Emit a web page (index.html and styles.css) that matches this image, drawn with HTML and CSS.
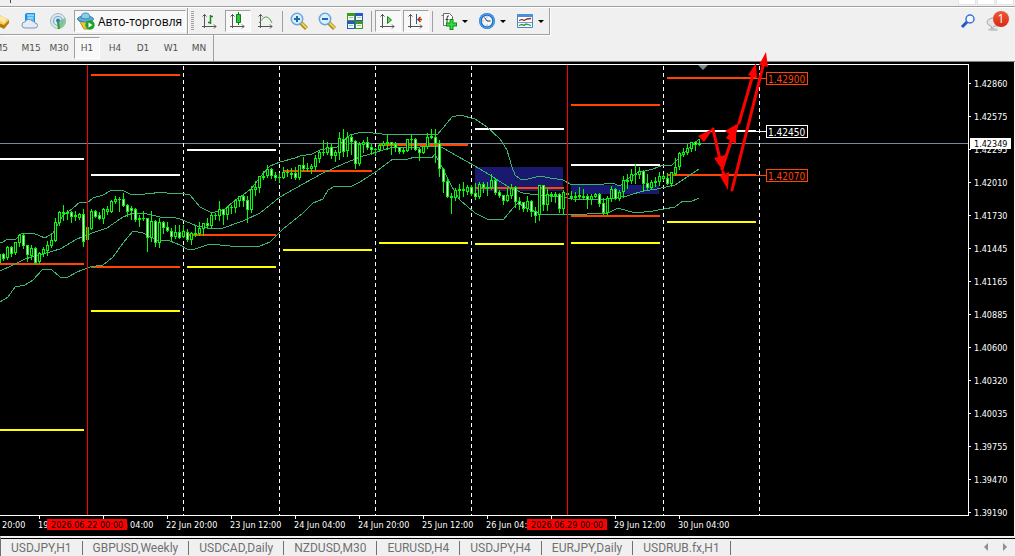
FILE: index.html
```html
<!DOCTYPE html>
<html lang="ru">
<head>
<meta charset="utf-8">
<title>H1</title>
<link rel="stylesheet" href="styles.css">
</head>
<body>
<div class="app">
  <div class="menu-edge">
    <span class="menu-mark"></span>
    <span class="win-box"></span><span class="win-box"></span><span class="win-box"></span>
  </div>
  <header class="toolbars">
    <div class="row">
      <div class="group group-main">
        <button class="tool tool-cut" aria-label="Ордер"><svg width="18" height="18" viewBox="0 0 18 18"><path d="M1 9 6 3l10 5v3l-5 6L1 12z" fill="#b87a10"/><path d="M1 9 6 3l10 5-5 5z" fill="#f7cf62"/><path d="m5 7 3-3 6 3-3 4z" fill="#fde9a6"/></svg></button>
        <button class="tool" aria-label="VPS"><svg width="18" height="18" viewBox="0 0 18 18"><path d="M4 2l2-1h8v10H4z" fill="#1593e6"/><path d="M6 3h7v7H6z" fill="#4db8f8"/><path d="M6 3h7M7 6h5" stroke="#d9f1ff"/><path d="M4 16a3 3 0 0 1 0-6 4 4 0 0 1 7-1 3 3 0 0 1 3 2 2.500 2.500 0 0 1 0 5z" fill="#e4ecf6" stroke="#7d95b8"/></svg></button>
        <button class="tool" aria-label="Сигналы"><svg width="18" height="18" viewBox="0 0 18 18"><circle cx="9" cy="9" r="7.500" fill="#dce9ec" stroke="#9fb9c9"/><path d="M9 9l7-3a7.500 7.500 0 0 1-5 10.500L9 17z" fill="#8cc98e"/><circle cx="9" cy="9" r="4.500" fill="none" stroke="#7da9d0" stroke-width="1.200"/><circle cx="9" cy="8.500" r="2" fill="#3579c4"/><path d="M9 10l1 7" fill="none" stroke="#2ca22c" stroke-width="2"/></svg></button>
        <button class="tool tool-auto is-on"><svg width="18" height="18" viewBox="0 0 18 18"><path d="M2 8h13l-3 9H7z" fill="#f2c43b" stroke="#c28c14"/><ellipse cx="8.500" cy="7" rx="8" ry="3" fill="#5faed8" stroke="#2f7eab"/><path d="M4 6q0-5 4.500-5T13 6q-4 2-9 0z" fill="#8cccec" stroke="#3c8cb8"/><circle cx="13" cy="13" r="4.700" fill="#1ea32c"/><path d="m11.500 10.500 4 2.500-4 2.500z" fill="#fff"/></svg><span>Авто-торговля</span></button>
      </div>
      <div class="group group-chart">
        <i class="grip"></i>
        <button class="tool" aria-label="Бары"><svg width="18" height="18" viewBox="0 0 18 18"><path d="M3.500 2v14M1 14.500h14M1.500 4.500l2-2 2 2M13 12.500l2 2-2 2" stroke="#555" fill="none"/><path d="M9.500 3v9M7 10.500h2.500M9.500 4.500H12" stroke="#168a16" fill="none" stroke-width="1.500"/></svg></button>
        <button class="tool is-on" aria-label="Свечи"><svg width="18" height="18" viewBox="0 0 18 18"><path d="M3.500 2v14M1 14.500h14M1.500 4.500l2-2 2 2M13 12.500l2 2-2 2" stroke="#555" fill="none"/><path d="M9.500 0v13" stroke="#118011"/><path d="M7.500 2.500h4v8h-4z" fill="#27c83c" stroke="#118011"/></svg></button>
        <button class="tool" aria-label="Линия"><svg width="18" height="18" viewBox="0 0 18 18"><path d="M3.500 2v14M1 14.500h14M1.500 4.500l2-2 2 2M13 12.500l2 2-2 2" stroke="#555" fill="none"/><path d="M2 11q5-7 8-6t5 6" stroke="#49a049" fill="none"/></svg></button>
        <i class="sep"></i>
        <button class="tool" aria-label="Увеличить"><svg width="18" height="18" viewBox="0 0 18 18"><path d="m10.500 10.500 6 6" stroke="#a98216" stroke-width="4"/><path d="m11 10.500 5.500 5.500" stroke="#f4d24f" stroke-width="2"/><circle cx="7" cy="7" r="5.700" fill="#d9efff" stroke="#6ca6d8" stroke-width="1.500"/><path d="M4 7h6M7 4v6" stroke="#2467a8" stroke-width="2"/></svg></button>
        <button class="tool" aria-label="Уменьшить"><svg width="18" height="18" viewBox="0 0 18 18"><path d="m10.500 10.500 6 6" stroke="#a98216" stroke-width="4"/><path d="m11 10.500 5.500 5.500" stroke="#f4d24f" stroke-width="2"/><circle cx="7" cy="7" r="5.700" fill="#d9efff" stroke="#6ca6d8" stroke-width="1.500"/><path d="M4 7h6" stroke="#2467a8" stroke-width="2"/></svg></button>
        <button class="tool" aria-label="Окна"><svg width="18" height="18" viewBox="0 0 18 18"><path d="M1 1h8v8H1zM9 9h8v8H9z" fill="#3f9a1c"/><path d="M9 1h8v8H9zM1 9h8v8H1z" fill="#2558c8"/><path d="M2 4h6v4H2zM10 4h6v4h-6zM2 12h6v4H2zM10 12h6v4h-6z" fill="#f2f8f2"/><path d="M3 5.500h4M11 5.500h4M3 13.500h4M11 13.500h4" stroke="#9cc4a4"/></svg></button>
        <i class="sep"></i>
        <button class="tool is-on" aria-label="Автопрокрутка"><svg width="18" height="18" viewBox="0 0 18 18"><path d="M3.500 2v14M1 14.500h14M1.500 4.500l2-2 2 2M13 12.500l2 2-2 2" stroke="#555" fill="none"/><path d="m8.500 4.500 4 3.500-4 3.500z" fill="#5fd25f" stroke="#168a16"/></svg></button>
        <button class="tool is-on" aria-label="Сдвиг"><svg width="18" height="18" viewBox="0 0 18 18"><path d="M3.500 2v14M1 14.500h14M1.500 4.500l2-2 2 2M13 12.500l2 2-2 2" stroke="#555" fill="none"/><path d="M9.500 2v10" stroke="#1565a0"/><path d="M15 7.500h-4M13.500 5 11 7.500l2.500 2.500" stroke="#c03008" fill="none" stroke-width="1.500"/></svg></button>
        <i class="sep"></i>
        <button class="tool tool-drop" aria-label="Индикаторы"><svg width="18" height="18" viewBox="0 0 18 18"><path d="M3.500 1.500h6l3 3v9h-9z" fill="#fff" stroke="#666"/><path d="M1.500 3.500h2v10h6" fill="none" stroke="#777"/><path d="M9 4q-2-1-2 2v6M5.500 7.500h3" stroke="#333" fill="none"/><path d="M11.500 7v11M6 12.500h11" stroke="#0c8f14" stroke-width="4"/><path d="M11.500 8v9M7 12.500h9" stroke="#35dd3f" stroke-width="2"/></svg><i class="caret"></i></button>
        <button class="tool tool-drop" aria-label="Периоды"><svg width="18" height="18" viewBox="0 0 18 18"><circle cx="9" cy="9" r="8" fill="#1c6fca"/><circle cx="9" cy="9" r="7" fill="none" stroke="#62adf0"/><circle cx="9" cy="9" r="5.200" fill="#f1f7fc"/><path d="M9 9 6.500 5.500M9 9h3.500" stroke="#333" fill="none"/><path d="M9 4.500v1M9 12.500v1M4.500 9h1" stroke="#777"/></svg><i class="caret"></i></button>
        <button class="tool tool-drop" aria-label="Шаблоны"><svg width="18" height="18" viewBox="0 0 18 18"><path d="M1.500 2.500h15v13h-15z" fill="#fff" stroke="#4a86c8"/><path d="M1 2h16v3H1z" fill="#4a8fdc"/><path d="M2 10.500h14" stroke="#6e9fd4"/><path d="m3 8.500 3-1 2 1 3-1.500 4-.5" stroke="#a3281c" fill="none" stroke-width="1.300"/><path d="m3 13.500 3-1 2 1 2-1.500 2 .5 3 1" stroke="#1c8f2c" fill="none" stroke-width="1.200"/></svg><i class="caret"></i></button>
      </div>
      <div class="right">
        <button class="tool" aria-label="Поиск"><svg width="18" height="18" viewBox="0 0 18 18"><circle cx="11" cy="6" r="4" fill="#f4f8ff" stroke="#3a6fdc" stroke-width="1.500"/><path d="m8 9-5 5" stroke="#2456c8" stroke-width="3"/></svg></button>
        <button class="tool tool-chat" aria-label="Сообщения"><svg width="20" height="20" viewBox="0 0 20 20"><ellipse cx="7" cy="17.500" rx="5" ry="1.500" fill="#c8c8c8"/><path d="M6 17 5 14Q1 13 1 10t5-4h5q4 1 3 5t-6 3z" fill="#e6e6ea" stroke="#a8a8ae"/></svg><span class="badge">1</span></button>
      </div>
    </div>
    <div class="row row-frames">
      <div class="group group-frames">
        <button class="frame frame-cut">M5</button><button class="frame">M15</button><button class="frame">M30</button><button class="frame is-on">H1</button><button class="frame">H4</button><button class="frame">D1</button><button class="frame">W1</button><button class="frame">MN</button>
      </div>
    </div>
  </header>
  <main class="chart">
    <svg id="plot" viewBox="0 62 1014 474" role="img" aria-label="H1">
      <g id="zones" class="zone"></g>
      <path class="price-line" d="M0 143.500h968"/>
      <g id="levels"></g>
      <g id="days"></g>
      <g class="bands">
        <polyline points="0,242 3,242 8,239 15,240 21,234 33,233 40,236 45,238 53,233 63,215 72,209 80,202 87,203 93,198 103,195 112,190 122,190 130,194 143,195 147,193 152,194 157,192 167,193 180,193 190,195 200,207 212,213 225,209 233,202 243,195 252,188 260,177 270,166 280,162 295,158 300,156 312,154 320,150 330,148 337,147 342,142 350,135 362,132 373,133 390,135 410,134 437,135 443,128 452,117 460,115 475,119 487,127 500,139 507,150 512,167 515,175 520,179 528,179 540,176 550,178 563,180 572,185 583,184 597,185 612,183 620,186 627,179 637,173 653,169 663,165 672,165 680,157 690,147 699,139"/>
        <polyline points="0,271 13,265 25,259 43,254 60,249 77,239 95,232 107,228 123,217 133,213 143,213 160,217 172,217 180,219 197,226 207,228 223,228 243,221 260,213 280,197 303,184 323,173 343,164 360,157 377,152 393,147 420,147 437,146 443,148 457,156 475,166 493,177 510,188 523,193 530,194 550,196 563,197 573,199 607,199 627,196 643,191 657,189 675,185 687,177 699,169"/>
        <polyline points="0,302 8,297 15,287 25,285 33,280 43,269 52,270 60,277 68,277 77,272 90,267 103,265 113,257 123,243 133,231 143,233 157,240 170,241 180,245 187,249 195,249 210,244 240,247 260,246 270,242 283,229 303,213 313,203 323,199 328,190 335,186 350,187 360,182 377,171 393,159 408,159 415,157 432,158 435,154 442,167 452,187 460,200 475,213 487,219 503,220 513,208 518,203 527,208 540,214 567,215 608,213 618,208 635,213 653,211 675,207 683,201 690,202 699,198"/>
      </g>
      <g id="candles"></g>
      <path class="event" d="M87.500 65v450M567.500 65v450"/>
      <path class="frame-line" d="M0 64.500h968.500v451H0"/>
      <path fill="#778899" d="M698 65h10l-5 5z"/>
      <g id="priceAxis" class="axis"></g>
      <g id="timeAxis" class="axis"></g>
      <g class="mark"><rect x="47" y="519" width="80" height="11"/><text x="51" y="528">2026.06.22 00:00</text></g>
      <g class="mark"><rect x="527" y="519" width="80" height="11"/><text x="531" y="528">2026.06.29 00:00</text></g>
      <g class="tag tag-red"><path d="M756 78.500h10"/><rect x="766.500" y="72.500" width="41" height="12"/><text x="768" y="83">1.42900</text></g>
      <g class="tag tag-white"><path d="M756 131.500h10"/><rect x="766.500" y="125.500" width="41" height="12"/><text x="768" y="136">1.42450</text></g>
      <g class="tag tag-red"><path d="M756 175.500h10"/><rect x="766.500" y="169.500" width="41" height="12"/><text x="768" y="180">1.42070</text></g>
      <g class="arrows">
        <path class="shaft" d="M713 129 721 164M722 169l11-34M739 123l15-52M732 190l32-128M723 172l3 8"/>
        <path class="head" d="M698 136 714 128 704 142zM714 158l11-3-2 16zM748 75l9 3-1-15zM759 65l9 2-2-15zM720 176l9-4-1 18z"/>
        <path class="head" d="M726 138l10 6 0-20z"/>
        <path class="head" d="M725 131l14-8-4 15z"/>
      </g>
    </svg>
  </main>
  <nav class="tabs">
    <button class="tab">USDJPY,H1</button><button class="tab">GBPUSD,Weekly</button><button class="tab">USDCAD,Daily</button><button class="tab">NZDUSD,M30</button><button class="tab">EURUSD,H4</button><button class="tab">USDJPY,H4</button><button class="tab">EURJPY,Daily</button><button class="tab">USDRUB.fx,H1</button>
    <span class="scroll"><button class="arrow" aria-label="Назад"><svg width="4" height="8" viewBox="0 0 4 8"><path d="M4 0v8L0 4z"/></svg></button><button class="arrow" aria-label="Вперёд"><svg width="4" height="8" viewBox="0 0 4 8"><path d="M0 0v8l4-4z"/></svg></button></span>
  </nav>
</div>
<script src="chart.js"></script>
</body>
</html>
```

FILE: styles.css
```css
* { box-sizing: border-box; }
body { margin: 0; background: #f0f0f0; font-family: "Open Sans", "Noto Sans", sans-serif; font-size: 12px; }
button { border: 0; padding: 0; margin: 0; background: none; font: inherit; color: inherit; }
.app { display: flex; flex-direction: column; min-height: 100vh; overflow: hidden; }
.menu-edge { display: flex; justify-content: flex-end; gap: 1px; height: 7px; border-bottom: 1px solid #a0a0a0; padding-right: 1px; }
.menu-mark { width: 1px; height: 3px; background: #7a2f5c; margin: 0 auto 0 10px; }
.win-box { width: 18px; height: 5px; border: 1px solid #e4e4e4; border-top: 0; background: #fff; }
.toolbars { border-top: 1px solid #fff; border-bottom: 1px solid #808080; background: #f0f0f0; }
.row { display: flex; height: 27px; }
.group { display: flex; align-items: center; gap: 2px; border-right: 1px solid #a0a0a0; border-bottom: 1px solid #a0a0a0; box-shadow: 1px 1px 0 #fff; }
.group-main { padding-right: 1px; }
.group-chart { padding: 0 1px 0 3px; }
.group-frames { padding-right: 1px; border-bottom: 0; box-shadow: none; }
.row-frames { height: 26px; }
.tool { display: flex; align-items: center; justify-content: center; width: 26px; height: 22px; flex: none; }
.tool svg { flex: none; }
.tool-cut { width: 15px; justify-content: flex-end; padding-right: 4px; }
.tool-auto { width: auto; gap: 3px; padding: 0 3px 0 2px; margin-left: 1px; color: #000; }
.tool-drop { width: 36px; gap: 4px; }
.is-on { background: #f8f8f8; border: 1px solid #fff; border-top-color: #a0a0a0; border-left-color: #a0a0a0; }
.grip { width: 3px; height: 20px; margin-right: 1px; background: repeating-linear-gradient(#a0a0a0 0 1px, #f0f0f0 1px 2px); }
.sep { width: 1px; height: 21px; margin: 0 1px; background: #a0a0a0; }
.caret { border: 3px solid transparent; border-top-color: #000; border-bottom: 0; }
.right { display: flex; align-items: center; gap: 2px; margin-left: auto; padding-right: 6px; }
.tool-chat { position: relative; }
.badge { position: absolute; right: 0; top: 0; width: 16px; height: 16px; border-radius: 8px; background: linear-gradient(#f0583a, #d82a10); color: #fff; line-height: 16px; text-align: center; }
.frame { width: 26px; height: 22px; font-family: "DejaVu Sans", sans-serif; font-size: 9px; color: #505050; }
.frame-cut { width: 16px; display: flex; align-items: center; justify-content: flex-end; padding-right: 8px; }
.chart { display: flex; flex: 1; margin-right: 1px; background: #000; }
.chart svg { display: block; width: 100%; overflow: visible; }
#plot text { font-family: "DejaVu Sans Condensed", "DejaVu Sans", sans-serif; font-size: 9px; }
#plot .tag text { font-size: 10px; }
#zones, #levels, #days, #candles, .price-line, .event, .frame-line, .bands, .axis path, .axis rect, .tag path, .tag rect { shape-rendering: crispEdges; }
.zone { fill: #191970; }
.price-line { stroke: #778899; }
.bands polyline { fill: none; stroke: #3cb371; }
.day { stroke: #fff; stroke-dasharray: 4 3; }
.event { stroke: #f00; }
.frame-line { fill: none; stroke: #fff; }
.level-red { fill: #ff4500; }
.level-white { fill: #fff; }
.level-yellow { fill: #ff0; }
.candle { fill: #0f0; }
.body-up { fill: #000; }
.body-down { fill: #fff; }
.axis path { stroke: #fff; }
.axis text { fill: #fff; }
.axis .now { fill: #fff; }
#plot .axis .now-text { fill: #000; }
.mark rect { fill: #f00; }
.mark text { fill: #000; }
.tag rect { fill: #000; }
.tag-red { stroke: #ff4500; fill: #ff4500; }
.tag-white { stroke: #fff; fill: #fff; }
.tag text { stroke: none; }
.arrows .shaft { stroke: #f00; stroke-width: 3; stroke-linecap: round; }
.arrows .head { fill: #f00; }
.tabs { display: flex; align-items: center; height: 20px; border-top: 2px solid #f0f0f0; box-shadow: inset 0 1px 0 #000; color: #707070; border-left: 1px solid #707070; font-family: Roboto, sans-serif; }
.tab { height: 14px; margin-top: 1px; padding: 0 10px; line-height: 14px; border-right: 1px solid #707070; white-space: nowrap; }
.scroll { display: flex; gap: 15px; margin-left: auto; padding-right: 8px; }
.arrow { display: flex; fill: #909090; }
```

FILE: chart.js
```javascript
const NS = "http://www.w3.org/2000/svg";

function add(parent, tag, attrs, text) {
  const el = document.createElementNS(NS, tag);
  for (const key in attrs) el.setAttribute(key, attrs[key]);
  if (text) el.textContent = text;
  document.getElementById(parent).appendChild(el);
}

// Hourly bars: high, body top, body bottom, low, direction (u = up, d = down)
const bars = `253 254 262 263 d|253 254 258 260 d|246 247 257 259 u|246 247 253 256 d|242 242 252 254 u|234 235 242 246 u
233 235 245 248 d|245 245 254 261 d|245 248 255 259 u|247 248 262 264 d|252 253 261 263 u
247 249 253 256 u|241 245 250 255 u|235 240 245 247 u|218 222 240 241 u|211 212 222 225 u
205 212 213 220 u|210 212 213 219 u|211 212 216 222 d|211 215 216 220 u|213 214 217 219 u
209 214 241 246 d|220 227 239 248 u|209 211 228 229 u|210 211 216 217 d|212 215 218 219 d
208 209 218 223 u|206 209 211 214 u|200 201 211 212 u|196 199 201 203 u|197 199 199 211 u
193 199 205 206 d|204 205 211 216 d|206 208 210 219 d|208 209 219 221 d|215 218 219 226 u
211 218 218 220 u|218 218 237 251 d|211 221 237 241 u|220 221 242 246 d|218 222 242 247 u
221 222 227 233 d|222 227 230 231 d|228 231 236 240 d|225 232 236 238 u|225 232 237 238 d
225 231 236 237 u|229 232 239 241 d|232 233 239 244 u|226 233 234 236 u|222 228 233 235 u
223 223 228 235 u|218 223 225 227 d|213 215 225 228 u|213 215 215 219 u|201 209 215 220 u
209 209 214 224 d|206 207 214 219 u|205 207 207 213 u|199 200 207 212 u|196 196 200 206 u
195 196 200 206 d|196 200 209 222 d|186 189 209 212 u|181 187 189 195 u|176 176 187 192 u
171 176 177 179 u|165 169 175 177 u|168 169 175 178 d|172 175 177 180 d|173 177 177 182 u
167 172 177 178 u|169 172 172 176 u|168 173 174 178 u|167 173 177 179 d|165 165 177 179 u
157 165 168 170 d|163 168 168 171 u|164 166 168 173 u|155 158 166 170 u|151 152 158 162 u
140 152 152 155 u|142 147 152 154 u|143 147 155 158 d|150 152 155 161 u|132 138 152 159 u
129 139 151 156 d|132 137 150 156 u|134 137 141 154 d|140 141 163 168 d|142 144 163 165 u
140 142 144 152 u|137 142 147 149 d|144 147 149 154 d|148 149 149 155 u|144 145 149 151 u
141 143 145 148 u|135 142 143 149 u|142 142 144 154 d|142 144 147 151 d|147 147 151 153 d
148 150 151 153 u|139 139 150 151 u|134 139 139 149 u|138 139 149 150 d|148 149 152 160 d
146 146 152 153 u|133 137 146 148 u|129 136 137 138 u|129 137 143 162 d|140 143 168 176 d
168 169 181 192 d|178 181 196 197 d|193 196 197 213 u|188 190 197 200 u|184 189 190 197 u
182 189 190 196 u|185 187 191 194 u|185 187 193 195 d|183 193 196 199 d|182 184 196 198 u
182 184 187 192 d|182 187 188 195 u|174 180 187 189 u|178 180 192 194 d|190 192 195 197 d
195 195 200 204 d|188 195 200 201 u|184 188 195 198 u|186 187 201 207 d|197 201 204 209 d
202 202 208 211 d|196 201 208 211 u|200 201 211 216 d|207 211 215 222 d|185 185 214 220 u
185 185 204 210 d|189 194 204 210 u|192 194 195 201 u|192 194 195 202 u|193 194 208 212 d
190 192 208 213 u|188 193 194 206 u|191 196 197 199 u|192 196 197 201 u|187 195 196 198 u
189 196 197 199 u|194 196 199 208 d|194 196 199 204 u|193 194 196 197 u|193 194 203 206 d
198 203 212 214 d|196 198 212 214 u|186 189 198 201 u|188 189 198 199 d|190 192 198 200 u
176 180 191 197 u|174 180 181 188 u|169 174 180 183 u|164 174 174 183 u|167 171 174 178 u
170 171 183 191 d|174 183 187 189 d|180 182 187 189 u|177 181 182 186 u|172 176 181 185 u
174 176 178 180 u|173 178 183 184 d|172 172 183 186 u|158 167 173 175 u|152 153 166 169 u
148 152 154 156 u|144 148 152 154 u|142 142 148 151 u|142 142 144 150 d|139 143 144 145 u`;

bars.split(/[|\n]/).forEach((row, i) => {
  const [high, top, bottom, low, dir] = row.split(" ");
  const x = -1 + i * 4;
  add("candles", "rect", { class: "candle", x, y: high, width: 1, height: low - high + 1 });
  add("candles", "rect", { class: "candle", x: x - 1, y: top, width: 3, height: bottom - top + 1 });
  if (bottom - top > 1) {
    add("candles", "rect", { class: dir === "u" ? "body-up" : "body-down", x, y: +top + 1, width: 1, height: bottom - top - 1 });
  }
});

// Daily levels: left edge, width, y
const levels = {
  red: [[0, 84, 263], [91, 89, 266], [91, 89, 74], [187, 89, 234], [283, 89, 170], [379, 89, 144], [475, 89, 187], [571, 89, 215], [571, 89, 104], [667, 89, 77], [667, 89, 174]],
  white: [[0, 84, 158], [91, 89, 174], [187, 89, 149], [475, 89, 128], [571, 89, 164], [667, 89, 130]],
  yellow: [[0, 84, 429], [91, 89, 310], [187, 89, 266], [283, 89, 249], [379, 89, 242], [475, 89, 243], [571, 89, 242], [667, 89, 221]]
};
for (const color in levels) {
  for (const [x, width, y] of levels[color]) add("levels", "rect", { class: "level-" + color, x, y, width, height: 2 });
}

add("zones", "rect", { x: 475, y: 167, width: 88, height: 24 });
add("zones", "rect", { x: 571, y: 185, width: 88, height: 9 });

for (const x of [183, 279, 375, 471, 663, 759]) add("days", "path", { class: "day", d: `M${x + 0.5} 66V515` });

const prices = ["1.42860", "1.42575", "1.42295", "1.42010", "1.41730", "1.41445", "1.41165", "1.40885", "1.40600", "1.40320", "1.40035", "1.39755", "1.39470", "1.39190"];
prices.forEach((price, i) => {
  const y = 83 + i * 33;
  add("priceAxis", "path", { d: `M969 ${y + 0.5}h2` });
  add("priceAxis", "text", { x: 974, y: y + 4 }, price);
});
add("priceAxis", "rect", { class: "now", x: 970, y: 138, width: 41, height: 11 });
add("priceAxis", "text", { class: "now-text", x: 974, y: 147 }, "1.42349");

// The label under the second date mark is left out
const times = ["18 Jun 20:00", "19 Jun 12:00", "22 Jun 04:00", "22 Jun 20:00", "23 Jun 12:00", "24 Jun 04:00", "24 Jun 20:00", "25 Jun 12:00", "26 Jun 04:00", "", "29 Jun 12:00", "30 Jun 04:00"];
times.forEach((time, i) => {
  const x = -25 + i * 64;
  add("timeAxis", "path", { d: `M${x + 0.5} 516v3` });
  if (time) add("timeAxis", "text", { x: x - 1, y: 528 }, time);
});
```
